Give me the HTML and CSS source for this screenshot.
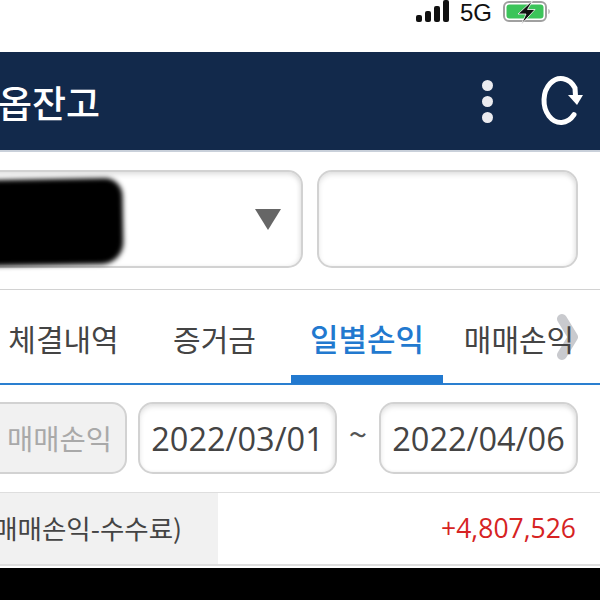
FILE: index.html
```html
<!DOCTYPE html>
<html>
<head>
	<meta charset="utf-8">
	<title>옵잔고</title>
	<link rel="stylesheet" href="styles.css">
</head>
<body>
	<div class="screen">
		<div class="status">
			<div class="signal"><i class="s1"></i><i class="s2"></i><i class="s3"></i><i class="s4"></i></div>
			<span class="net">5G</span>
			<svg class="battery" width="48" height="24" viewBox="0 0 48 24">
				<rect x="1" y="2" width="42" height="19" rx="5" fill="#fff" stroke="#a0a0a0" stroke-width="2"/>
				<rect x="3.500" y="4.500" width="37" height="14" rx="3" fill="#3cc45a"/>
				<path d="M45.500 9c1.500 .5 1.500 4.500 0 5z" fill="#999"/>
				<path d="M30 0 L15 14 H23 L18.500 24 L32 9.500 H24.500 Z" fill="#111" stroke="#fff" stroke-width=".8"/>
			</svg>
		</div>
		<div class="head">
			<h1 class="title">옵잔고</h1>
			<div class="dots"><i></i><i></i><i></i></div>
			<svg class="reload" width="48" height="54" viewBox="0 0 48 54">
				<path d="M36 40.700 A17 22 0 1 1 37 14 L37.500 22" fill="none" stroke="#fff" stroke-width="5" stroke-linecap="round"/>
				<path d="M30 21 L45 21 L39 31 Z" fill="#fff"/>
			</svg>
		</div>
		<div class="pick">
			<div class="box select">
				<div class="mask"></div>
				<div class="arrow"></div>
			</div>
			<div class="box blank"></div>
		</div>
		<div class="tabs">
			<svg class="more" width="26" height="48" viewBox="0 0 26 48">
				<path d="M7 6 L18 24 L7 42" fill="none" stroke="#c9cace" stroke-width="10" stroke-linejoin="round" stroke-linecap="round"/>
			</svg>
			<a class="tab t1" href="javascript:;">체결내역</a>
			<a class="tab t2" href="javascript:;">증거금</a>
			<a class="tab t3" href="javascript:;">일별손익</a>
			<a class="tab t4" href="javascript:;">매매손익</a>
		</div>
		<div class="filter">
			<a class="btn" href="javascript:;">매매손익</a>
			<div class="box date">2022/03/01</div>
			<span class="tilde">~</span>
			<div class="box date">2022/04/06</div>
		</div>
		<div class="row">
			<div class="label">매매손익-수수료)</div>
			<div class="val">+4,807,526</div>
		</div>
		<div class="foot"></div>
	</div>
</body>
</html>
```

FILE: styles.css
```css
*{box-sizing: border-box;}
html,body{margin: 0;padding: 0;background: #ffffff;}
a{text-decoration: none;}
.screen{width: 600px;height: 600px;overflow: hidden;display: flex;flex-direction: column;font-family: "Noto Sans CJK KR","Liberation Sans",sans-serif;color: #444444;}

.status{height: 52px;flex: none;display: flex;align-items: flex-start;justify-content: flex-end;padding-right: 49px;}
.signal{display: flex;align-items: flex-end;gap: 3px;height: 22px;}
.signal i{display: block;width: 6px;background: #111111;border-radius: 2px;}
.signal .s1{height: 7px;}
.signal .s2{height: 11px;}
.signal .s3{height: 16px;}
.signal .s4{height: 22px;}
.net{font-family: "Liberation Sans",sans-serif;font-size: 24px;line-height: 25px;color: #111111;margin-left: 11px;}
.battery{margin-left: 11px;}

.head{height: 98px;flex: none;background: #12294b;display: flex;align-items: center;padding-right: 14px;}
.title{margin: 2px 0 0 -2px;flex: 1;font-size: 37px;font-weight: 500;line-height: 98px;color: #ffffff;}
.dots{display: flex;flex-direction: column;gap: 5px;margin-right: 45px;}
.dots i{display: block;width: 11px;height: 11px;border-radius: 50%;background: #ebebef;}

.pick{height: 140px;flex: none;display: flex;align-items: flex-start;gap: 14px;padding: 18px 22px 0 0;border-top: 2px solid #c9d0da;border-bottom: 1px solid #d2d2d2;}
.box{background: #ffffff;border: 2px solid #d2d2d2;border-radius: 15px;box-shadow: inset 0 3px 5px rgba(0,0,0,0.1),inset -2px 0 4px rgba(0,0,0,0.05);}
.select{width: 320px;height: 98px;margin-left: -17px;display: flex;align-items: center;justify-content: space-between;padding-right: 20px;flex: none;}
.mask{width: 138px;height: 86px;margin-top: 6px;background: #000000;border-radius: 0 18px 22px 0;filter: blur(2.500px);transform: rotate(-1deg);}
.arrow{width: 0;height: 0;border-left: 13px solid transparent;border-right: 13px solid transparent;border-top: 21px solid #666666;}
.blank{flex: 1;height: 98px;}

.tabs{height: 95px;flex: none;display: flex;position: relative;border-bottom: 2px solid #2a7fd0;}
.tab{display: block;position: relative;font-size: 30px;line-height: 96px;color: #444444;white-space: nowrap;text-align: center;height: 94px;}
.t1{width: 137px;margin-left: -5px;}
.t2{width: 159px;padding-left: 6px;}
.t3{width: 152px;color: #2279cf;font-size: 31px;font-weight: 500;border-bottom: 9px solid #2279cf;}
.t4{width: 152px;}
.more{position: absolute;left: 555px;top: 23px;}

.filter{height: 108px;flex: none;display: flex;align-items: flex-start;padding-top: 17px;border-bottom: 1px solid #dedede;}
.btn{display: block;flex: none;width: 142px;height: 72px;margin-left: -15px;background: #f1f1f1;border: 2px solid #d2d2d2;border-radius: 15px;font-size: 28.500px;line-height: 68px;color: #a9a9a9;text-align: right;padding-right: 13px;}
.date{flex: none;width: 199px;height: 72px;font-size: 32.500px;line-height: 69px;text-align: center;color: #444444;font-family: "Open Sans","Noto Sans",sans-serif;}
.btn + .date{margin-left: 11px;}
.tilde{flex: none;width: 42px;text-align: center;font-size: 33px;line-height: 62px;color: #555555;}

.row{height: 73px;flex: none;display: flex;margin-bottom: 2px;border-bottom: 2px solid #dedede;}
.label{width: 218px;flex: none;display: flex;justify-content: flex-end;padding-right: 36px;background: #f1f1f1;font-size: 26.500px;line-height: 70px;color: #444444;white-space: nowrap;overflow: hidden;}
.val{flex: 1;text-align: right;font-family: "Open Sans","Noto Sans",sans-serif;font-size: 26.500px;line-height: 70px;color: #d62323;padding-right: 24px;}
.foot{flex: 1;background: #000000;}
```
